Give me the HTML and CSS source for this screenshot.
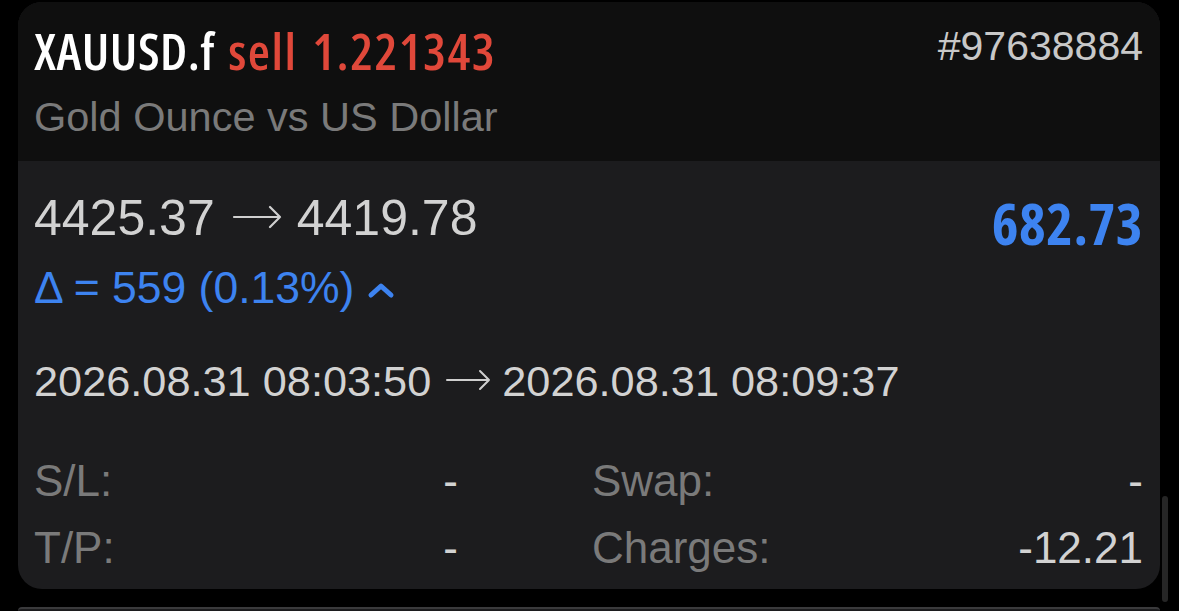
FILE: index.html
```html
<!DOCTYPE html>
<html>
<head>
<meta charset="utf-8">
<link rel="stylesheet" href="styles.css">
</head>
<body>
<div class="page">
  <div class="card">
    <div class="card-head">
      <div class="head-row">
        <div class="title"><span class="sym">XAUUSD.f</span> <span class="side">sell 1.221343</span></div>
        <div class="ticket">#97638884</div>
      </div>
      <div class="desc">Gold Ounce vs US Dollar</div>
    </div>
    <div class="card-body">
      <div class="price-row">
        <div class="prices">4425.37<svg class="arrow" width="62" height="24" viewBox="0 0 62 24"><path d="M8 12 H54 M44 2 L54 12 L44 22" fill="none" stroke="#cfcfcf" stroke-width="2.2" stroke-linecap="round" stroke-linejoin="round"/></svg>4419.78</div>
        <div class="profit">682.73</div>
      </div>
      <div class="delta">Δ = 559 (0.13%)
        <svg class="caret" width="28" height="18" viewBox="0 0 28 18"><polyline points="4,14 14,5 24,14" fill="none" stroke="#3d83f0" stroke-width="5" stroke-linecap="round" stroke-linejoin="round"/></svg>
      </div>
      <div class="times">2026.08.31 08:03:50<svg class="arrow small" width="56" height="22" viewBox="0 0 56 22"><path d="M8 11 H50 M41 2 L50 11 L41 20" fill="none" stroke="#cfcfcf" stroke-width="2" stroke-linecap="round" stroke-linejoin="round"/></svg>2026.08.31 08:09:37</div>
      <div class="details">
        <div class="col">
          <div class="pair"><span class="label">S/L:</span><span class="val">-</span></div>
          <div class="pair"><span class="label">T/P:</span><span class="val">-</span></div>
        </div>
        <div class="col">
          <div class="pair"><span class="label">Swap:</span><span class="val">-</span></div>
          <div class="pair"><span class="label">Charges:</span><span class="val">-12.21</span></div>
        </div>
      </div>
    </div>
  </div>
  <div class="next-card"></div>
  <div class="scrollbar"></div>
</div>
</body>
</html>
```
FILE: styles.css
```css
html, body {
  margin: 0;
  padding: 0;
  background: #000;
  width: 1179px;
  height: 611px;
  overflow: hidden;
}
.page {
  position: relative;
  width: 1179px;
  height: 611px;
  padding: 2px 0 0 18px;
  box-sizing: border-box;
  font-family: "Liberation Sans", Arial, sans-serif;
  overflow: hidden;
}
.card {
  width: 1142px;
  height: 587px;
  border-radius: 24px;
  overflow: hidden;
  background: #1c1c1e;
  display: flex;
  flex-direction: column;
}
.card-head {
  background: #0f0f0f;
  height: 159px;
  flex: none;
  box-sizing: border-box;
  padding: 21px 17px 0 16px;
}
.head-row {
  display: flex;
  justify-content: space-between;
  align-items: flex-start;
}
.title {
  font-family: "Open Sans", sans-serif;
  font-stretch: 75%;
  font-weight: 600;
  font-size: 51px;
  line-height: 54px;
  word-spacing: 4px;
}
.sym { color: #ffffff; letter-spacing: 0.5px; }
.side { color: #e0483a; letter-spacing: 1.5px; }
.ticket {
  color: #c8c8c8;
  font-size: 41px;
  line-height: 44px;
  margin-top: 1px;
}
.desc {
  color: #7a7a7a;
  font-size: 41.5px;
  line-height: 48px;
  margin-top: 16px;
}
.card-body {
  flex: 1;
  padding: 30px 17px 0 16px;
  color: #d2d2d2;
}
.price-row {
  display: flex;
  justify-content: space-between;
  align-items: flex-start;
}
.prices {
  font-size: 50px;
  line-height: 54px;
  display: flex;
  align-items: center;
}
.arrow {
  flex: none;
  margin: 0 9px 2px 11px;
}
.arrow.small {
  margin: 0 7px 2px 8px;
}
.profit {
  color: #3d83f0;
  font-family: "Open Sans", sans-serif;
  font-stretch: 75%;
  font-weight: 700;
  font-size: 57px;
  line-height: 62px;
  letter-spacing: 0.5px;
  margin-top: 1px;
}
.delta {
  color: #3d83f0;
  font-size: 44.5px;
  line-height: 50px;
  margin-top: 9px;
  display: flex;
  align-items: center;
  gap: 13px;
}
.caret { margin-top: 4px; }
.times {
  font-size: 43.3px;
  line-height: 50px;
  margin-top: 43px;
  display: flex;
  align-items: center;
}
.details {
  display: grid;
  grid-template-columns: 424px 551px;
  column-gap: 134px;
  margin-top: 50px;
}
.col {
  display: flex;
  flex-direction: column;
  gap: 17px;
}
.pair {
  display: flex;
  justify-content: space-between;
  font-size: 44px;
  line-height: 50px;
}
.label { color: #7a7a7a; }
.val { color: #d2d2d2; }
.next-card {
  width: 1142px;
  height: 4px;
  margin-top: 18px;
  border-radius: 24px 24px 0 0;
  background: #1c1c1e;
  border-top: 2px solid #3a3a3c;
  box-sizing: border-box;
}
.scrollbar {
  position: absolute;
  left: 1162px;
  top: 496px;
  width: 6px;
  height: 106px;
  border-radius: 3px;
  background: #262626;
}
```
